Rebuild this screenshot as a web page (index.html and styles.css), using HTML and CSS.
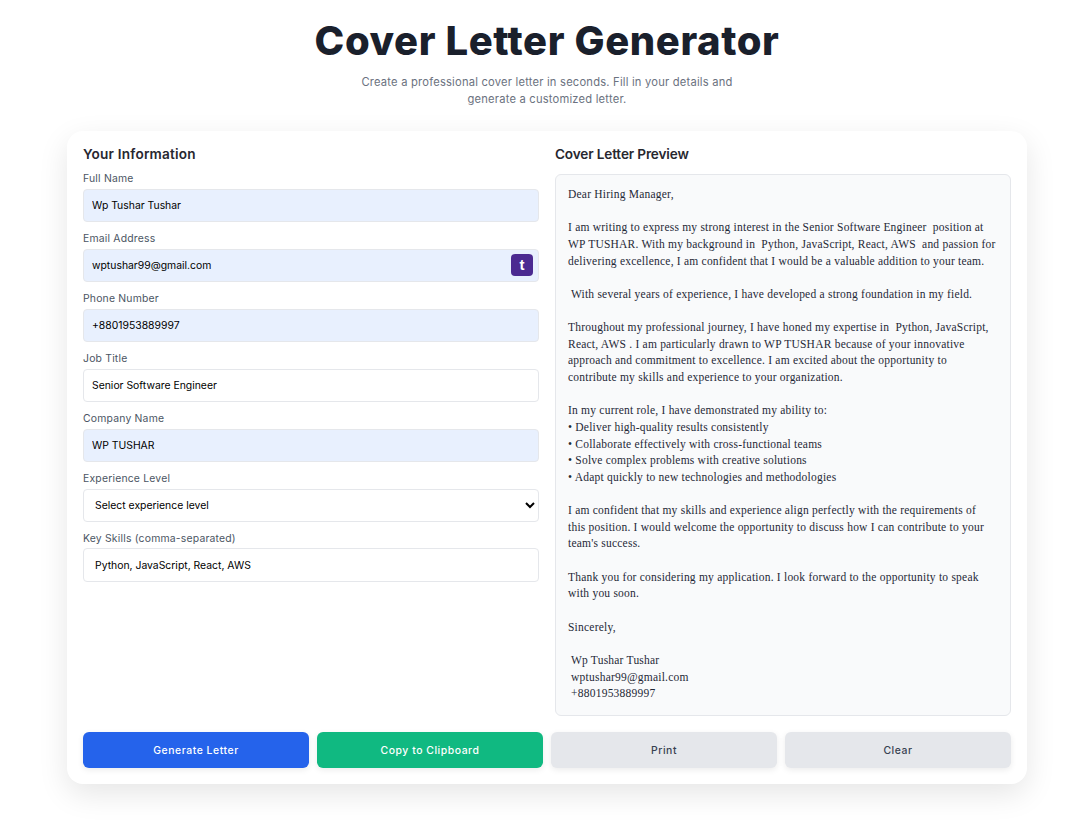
FILE: index.html
```html
<!DOCTYPE html>
<html lang="en">
<head>
<meta charset="utf-8">
<title>Cover Letter Generator</title>
<link rel="stylesheet" href="styles.css">
</head>
<body>
<main class="page">
  <header class="hero">
    <h1>Cover Letter Generator</h1>
    <p>Create a professional cover letter in seconds. Fill in your details and<br>generate a customized letter.</p>
  </header>
  <section class="card">
    <div class="columns">
      <form class="form">
        <h2>Your Information</h2>
        <div class="field"><label>Full Name</label><input class="filled" value="Wp Tushar Tushar"></div>
        <div class="field"><label>Email Address</label>
          <div class="input-wrap"><input class="filled" value="wptushar99@gmail.com"><span class="badge">t</span></div>
        </div>
        <div class="field"><label>Phone Number</label><input class="filled" value="+8801953889997"></div>
        <div class="field"><label>Job Title</label><input value="Senior Software Engineer"></div>
        <div class="field"><label>Company Name</label><input class="filled" value="WP TUSHAR"></div>
        <div class="field"><label>Experience Level</label><select><option>Select experience level</option></select></div>
        <div class="field skills"><label>Key Skills (comma-separated)</label><input class="wide" value="Python, JavaScript, React, AWS"></div>
      </form>
      <div class="preview">
        <h2>Cover Letter Preview</h2>
        <div class="letter">Dear Hiring Manager,

I am writing to express my strong interest in the Senior Software Engineer  position at
WP TUSHAR. With my background in  Python, JavaScript, React, AWS  and passion for
delivering excellence, I am confident that I would be a valuable addition to your team.

 With several years of experience, I have developed a strong foundation in my field.

Throughout my professional journey, I have honed my expertise in  Python, JavaScript,
React, AWS . I am particularly drawn to WP TUSHAR because of your innovative
approach and commitment to excellence. I am excited about the opportunity to
contribute my skills and experience to your organization.

In my current role, I have demonstrated my ability to:
• Deliver high-quality results consistently
• Collaborate effectively with cross-functional teams
• Solve complex problems with creative solutions
• Adapt quickly to new technologies and methodologies

I am confident that my skills and experience align perfectly with the requirements of
this position. I would welcome the opportunity to discuss how I can contribute to your
team's success.

Thank you for considering my application. I look forward to the opportunity to speak
with you soon.

Sincerely,

 Wp Tushar Tushar
 wptushar99@gmail.com
 +8801953889997</div>
      </div>
    </div>
    <div class="actions">
      <button class="btn blue">Generate Letter</button>
      <button class="btn green">Copy to Clipboard</button>
      <button class="btn grey">Print</button>
      <button class="btn grey">Clear</button>
    </div>
  </section>
</main>
</body>
</html>
```
FILE: styles.css
```css
* { box-sizing: border-box; }
html, body { margin: 0; background: #fff; }
body { font-family: Inter, "Liberation Sans", sans-serif; color: #1f2937; }
.page { width: 960px; margin-left: 67px; padding-top: 16px; padding-bottom: 41px; }
.hero { text-align: center; margin-bottom: 23px; }
.hero h1 { margin: 0 0 8px; font-size: 40px; line-height: 50px; font-weight: 800; color: #1a202c; letter-spacing: 0.6px; }
.hero p { margin: 0; font-size: 11.2px; line-height: 17px; color: #6b7280; letter-spacing: 0.2px; }
.card { background: #fff; border-radius: 16px; padding: 15px 16px 16px; box-shadow: 0 10px 30px rgba(0,0,0,.1); }
.columns { display: grid; grid-template-columns: 1fr 1fr; gap: 16px; }
h2 { margin: 0 0 9px; font-size: 13.6px; line-height: 16px; font-weight: 600; color: #27272f; letter-spacing: 0.2px; }
.field { margin-bottom: 9px; }
label { display: block; height: 16px; line-height: 16px; margin-bottom: 2px; font-size: 10.4px; color: #4b5563; letter-spacing: 0.2px; }
.skills label { margin-bottom: 1px; }
input, select { display: block; width: 100%; height: 33px; border: 1px solid #e5e7eb; border-radius: 4px; padding: 0 8px; font: 10.4px Inter, sans-serif; color: #000; background: #fff; outline: none; }
input.filled { background: #e8f0fe; }
input.wide { height: 34px; padding: 0 11px; }
select { padding: 0 7px; }
.input-wrap { position: relative; }
.badge { position: absolute; right: 6px; top: 5px; width: 22px; height: 22px; border-radius: 4px; background: #4b2a91; color: #fff; font: 700 15px/21px "Liberation Sans", sans-serif; text-align: center; }
.letter { height: 542px; padding: 11px 12px; background: #f9fafb; border: 1px solid #e5e7eb; border-radius: 6px; font-family: "Liberation Serif", serif; font-size: 11.5px; line-height: 16.64px; color: #1f2937; white-space: pre; overflow: hidden; letter-spacing: 0.22px; }
.preview h2 { margin-bottom: 12px; letter-spacing: -0.15px; }
.actions { display: grid; grid-template-columns: repeat(4, 1fr); gap: 8px; margin-top: 16px; }
.btn { height: 36px; border: 0; border-radius: 6px; font: 500 10.4px Inter, sans-serif; letter-spacing: 0.55px; box-shadow: 0 2px 6px rgba(0,0,0,.08); }
.blue { background: #2563eb; color: #fff; }
.green { background: #10b981; color: #fff; }
.grey { background: #e5e7eb; color: #374151; }
```
